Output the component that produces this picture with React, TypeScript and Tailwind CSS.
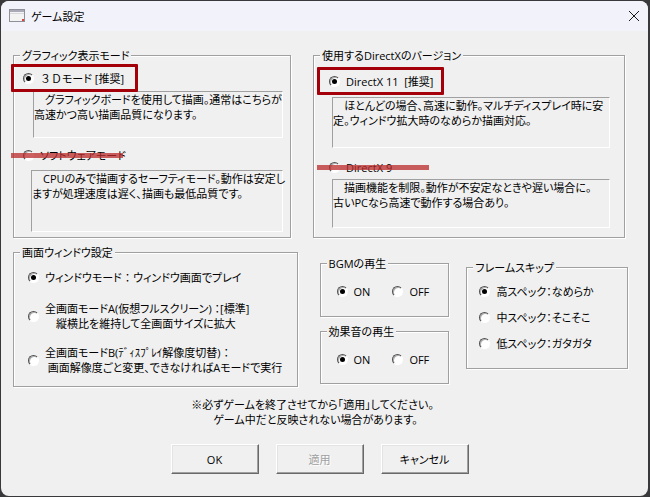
import React from 'react';
import clsx from 'clsx';

type GroupProps = {
    title: string;
    className?: string;
    children: React.ReactNode;
};

function Group({ title, className, children }: GroupProps) {
    return (
        <fieldset
            className={clsx(
                'min-w-0 border border-[#a0a0a0] shadow-[1px_1px_0_white,inset_1px_1px_0_white]',
                className
            )}
        >
            <legend className="ml-1.5 bg-[#f0f0f0] px-0.5 leading-[15px]">{title}</legend>
            {children}
        </fieldset>
    );
}

type OptionProps = {
    name: string;
    value: string;
    checked?: boolean;
    className?: string;
    overlay?: React.ReactNode;
    children: React.ReactNode;
};

function Option({ name, value, checked, className, overlay, children }: OptionProps) {
    return (
        <label className={clsx('relative flex w-fit items-center gap-1.5 whitespace-pre', className)}>
            <input
                type="radio"
                name={name}
                value={value}
                defaultChecked={checked}
                className="flex size-[11px] shrink-0 appearance-none items-center justify-center rounded-full border border-t-[#505050] border-r-white border-b-white border-l-[#505050] bg-white shadow-[inset_1px_1px_0_#b0b0b0] before:size-[5px] before:rounded-full checked:before:bg-black"
            />
            <span>{children}</span>
            {overlay}
        </label>
    );
}

function Description({ className, children }: { className?: string; children: React.ReactNode }) {
    return (
        <p
            className={clsx(
                'border border-t-[#a0a0a0] border-r-white border-b-white border-l-[#a0a0a0] whitespace-pre',
                className
            )}
        >
            {children}
        </p>
    );
}

// 注目させたい項目の赤枠
function RedFrame() {
    return (
        <span className="pointer-events-none absolute -top-[6px] -left-3 h-7 w-[127px] rounded-[1px] border-3 border-[#a40009]" />
    );
}

// 使わない項目の取り消し線
function RedStrike() {
    return <span className="pointer-events-none absolute top-1.5 -left-3 h-[5px] w-28 bg-[#bb2b2b]/75" />;
}

function PushButton({ disabled, children }: { disabled?: boolean; children: React.ReactNode }) {
    return (
        <button
            type="button"
            disabled={disabled}
            className="h-[30px] w-[88px] border border-t-white border-r-[#696969] border-b-[#696969] border-l-white bg-[#f0f0f0] shadow-[inset_-1px_-1px_0_#a0a0a0,inset_1px_1px_0_#e3e3e3] disabled:text-[#a0a0a0] disabled:text-shadow-[1px_1px_0_white]"
        >
            {children}
        </button>
    );
}

export default function App() {
    return (
        <div className="flex min-h-screen bg-[#39393c] pt-px pr-0.5 pb-px pl-px font-['Open_Sans','Noto_Sans_CJK_JP',sans-serif] text-[11px] leading-[15px] text-black [font-feature-settings:'palt']">
            <main className="flex flex-1 flex-col overflow-hidden rounded-lg bg-[#f0f0f0]">
                {/* タイトルバー */}
                <header className="flex h-[30px] items-center bg-[#f2f3fa] pr-1.5 pl-2">
                    <svg className="h-3.5 w-4" viewBox="0 0 16 14" aria-hidden="true">
                        <rect x="0.5" y="0.5" width="15" height="12" fill="#f3f3f3" stroke="#8f8f99" />
                        <rect x="1" y="1" width="14" height="2" fill="#a9a9b8" />
                        <path d="M1 4.5H15" stroke="#d8d8de" />
                        <rect x="13" y="10" width="2" height="2" fill="#e0443e" />
                    </svg>
                    <h1 className="ml-1.5 flex-1">ゲーム設定</h1>
                    <button type="button" aria-label="閉じる" className="p-0.5">
                        <svg className="size-3" viewBox="0 0 12 12" fill="none" stroke="#1b1b1b" aria-hidden="true">
                            <path d="M1 1L11 11M11 1L1 11" />
                        </svg>
                    </button>
                </header>

                <form className="flex flex-1 flex-col pt-[17px] pl-3">
                    <div className="flex gap-[22px] pr-[23px]">
                        <Group title="グラフィック表示モード" className="flex-[278] pt-[7px] pb-[5px]">
                            <Option name="mode" value="3d" checked className="ml-[9px] h-4" overlay={<RedFrame />}>
                                <span className="[font-feature-settings:normal]">３Ｄ</span>モード [推奨]
                            </Option>
                            <Description className="mt-[5px] mr-[7px] ml-[19px] h-[47px]">
                                {'　グラフィックボードを使用して描画。通常はこちらが\n高速かつ高い描画品質になります。'}
                            </Description>
                            <Option name="mode" value="software" className="mt-[9px] ml-[9px] h-4" overlay={<RedStrike />}>
                                ソフトウェアモード
                            </Option>
                            <Description className="mt-[7px] mr-[7px] ml-[17px] h-[62px]">
                                {'　CPUのみで描画するセーフティモード。動作は安定し\nますが処理速度は遅く、描画も最低品質です。'}
                            </Description>
                        </Group>

                        <Group title="使用するDirectXのバージョン" className="flex-[312] pt-2.5 pb-[5px]">
                            <Option name="directx" value="11" checked className="ml-[15px] h-4" overlay={<RedFrame />}>
                                DirectX 11  [推奨]
                            </Option>
                            <Description className="mt-2 mr-3.5 ml-[18px] h-[51px]">
                                {'　ほとんどの場合、高速に動作。マルチディスプレイ時に安\n定。ウィンドウ拡大時のなめらか描画対応。'}
                            </Description>
                            <Option name="directx" value="9" className="mt-[11px] ml-[15px] h-4" overlay={<RedStrike />}>
                                DirectX 9
                            </Option>
                            <Description className="mt-1 mr-3.5 ml-[18px] h-[49px]">
                                {'　描画機能を制限。動作が不安定なときや遅い場合に。\n古いPCなら高速で動作する場合あり。'}
                            </Description>
                        </Group>
                    </div>

                    <div className="mt-[7px] flex items-start pr-5">
                        <Group title="画面ウィンドウ設定" className="flex-[285] pt-[9px] pb-[11px]">
                            <Option name="window" value="window" checked className="ml-3.5 h-4">
                                ウィンドウモード ： ウィンドウ画面でプレイ
                            </Option>
                            <Option name="window" value="full-a" className="mt-4 ml-3.5">
                                {'全画面モードA(仮想フルスクリーン) ：[標準]\n　縦横比を維持して全画面サイズに拡大'}
                            </Option>
                            <Option name="window" value="full-b" className="mt-3.5 ml-3.5">
                                {'全画面モードB(ﾃﾞｨｽﾌﾟﾚｲ解像度切替) ：\n 画面解像度ごと変更、できなければAモードで実行'}
                            </Option>
                        </Group>

                        <div className="mt-[11px] ml-[22px] flex flex-[131] flex-col gap-[7px]">
                            <Group title="BGMの再生" className="pt-3 pb-[17px]">
                                <div className="ml-4 flex gap-[22px]">
                                    <Option name="bgm" value="on" checked className="h-4">
                                        ON
                                    </Option>
                                    <Option name="bgm" value="off" className="h-4">
                                        OFF
                                    </Option>
                                </div>
                            </Group>
                            <Group title="効果音の再生" className="pt-3 pb-4">
                                <div className="ml-4 flex gap-[22px]">
                                    <Option name="se" value="on" checked className="h-4">
                                        ON
                                    </Option>
                                    <Option name="se" value="off" className="h-4">
                                        OFF
                                    </Option>
                                </div>
                            </Group>
                        </div>

                        <Group title="フレームスキップ" className="mt-[15px] ml-[17px] flex-[161] pt-2 pb-[17px]">
                            <div className="ml-3 flex flex-col gap-2.5">
                                <Option name="skip" value="high" checked className="h-4">
                                    高スペック：なめらか
                                </Option>
                                <Option name="skip" value="mid" className="h-4">
                                    中スペック：そこそこ
                                </Option>
                                <Option name="skip" value="low" className="h-4">
                                    低スペック：ガタガタ
                                </Option>
                            </div>
                        </Group>
                    </div>

                    <p className="mx-auto mt-2.5 pr-9 whitespace-pre">
                        {'※必ずゲームを終了させてから「適用」してください。\n　　ゲーム中だと反映されない場合があります。'}
                    </p>

                    <div className="mt-[17px] flex justify-center gap-[17px] pr-[22px] pb-5">
                        <PushButton>OK</PushButton>
                        <PushButton disabled>適用</PushButton>
                        <PushButton>キャンセル</PushButton>
                    </div>
                </form>
            </main>
        </div>
    );
}
